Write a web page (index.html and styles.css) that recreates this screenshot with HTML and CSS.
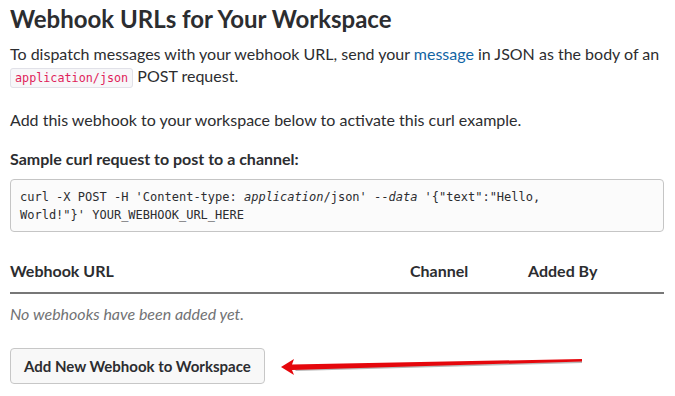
FILE: index.html
```html
<!DOCTYPE html>
<html lang="en">
<head>
    <meta charset="UTF-8">
    <title>Incoming Webhooks</title>
    <link rel="stylesheet" href="styles.css">
</head>
<body>
    <div class="page">
        <h2 class="title">Webhook URLs for Your Workspace</h2>
        <p class="intro">
            To dispatch messages with your webhook URL, send your <a href="#">message</a> in JSON as the body of an
            <code class="inline-code">application/json</code> POST request.
        </p>
        <p class="intro intro-last">Add this webhook to your workspace below to activate this curl example.</p>

        <h4 class="sample-title">Sample curl request to post to a channel:</h4>
        <pre class="code-block">curl -X POST -H 'Content-type: <i>application</i>/json' --<i>data</i> '{"text":"Hello,
World!"}' YOUR_WEBHOOK_URL_HERE</pre>

        <!-- 웹훅 목록 -->
        <div class="hooks">
            <div class="hooks-head">
                <span class="col-url">Webhook URL</span>
                <span class="col-channel">Channel</span>
                <span class="col-by">Added By</span>
            </div>
            <div class="hooks-empty">No webhooks have been added yet.</div>
        </div>

        <div class="actions">
            <button class="btn">Add New Webhook to Workspace</button>
            <svg class="arrow" width="310" height="24" viewBox="0 0 310 24">
                <!-- 그림자 -->
                <polygon points="14,15 302,7 302,9 16,17" fill="#9a9a9a" opacity="0.7"/>
                <!-- 화살표 -->
                <polygon points="1,13 14,5 12,10.5 302,5 302,7.5 12,16 14,21" fill="#e5070c"/>
            </svg>
        </div>
    </div>
</body>
</html>
```

FILE: styles.css
```css
body {
    margin: 0;
    padding: 0;
    background: #ffffff;
    color: #1d1c1d;
    font-family: Lato, "Open Sans", sans-serif;
}

.page {
    width: 654px;
    padding: 2px 10px 0 10px;
}

.title {
    margin: 0;
    font-size: 24px;
    font-weight: 700;
    line-height: 34px;
    color: #2c2d30;
}

.intro {
    margin: 7px 0 20px 0;
    font-size: 16px;
    line-height: 22px;
    color: #2c2d30;
}

.intro-last {
    margin: 0 0 17px 0;
}

.intro a {
    color: #1264a3;
    text-decoration: none;
}

/* 인라인 코드 */
.inline-code {
    font-family: "DejaVu Sans Mono", monospace;
    font-size: 11.75px;
    color: #e01e5a;
    background: #f7f7f9;
    border: 1px solid #e1e1e8;
    border-radius: 3px;
    padding: 2px 4px;
}

.sample-title {
    margin: 0 0 9px 0;
    font-size: 16px;
    font-weight: 700;
    line-height: 22px;
    color: #2c2d30;
}

.code-block {
    margin: 0;
    padding: 8px 9px 7px 9px;
    font-family: "DejaVu Sans Mono", monospace;
    font-size: 12px;
    line-height: 18px;
    color: #2c2d30;
    background: #fbfbfb;
    border: 1px solid #c5c5c5;
    border-radius: 4px;
    white-space: pre;
}

.code-block i {
    font-style: italic;
}

/* 테이블 */
.hooks {
    margin-top: 28px;
}

.hooks-head {
    display: flex;
    font-size: 16px;
    font-weight: 700;
    line-height: 22px;
    padding-bottom: 10px;
    border-bottom: 2px solid #777777;
    color: #2c2d30;
}

.col-url {
    width: 400px;
}

.col-channel {
    width: 118px;
}

.hooks-empty {
    padding-top: 9px;
    font-size: 16px;
    line-height: 22px;
    font-style: italic;
    color: #717274;
}

.actions {
    position: relative;
    margin-top: 23px;
}

.btn {
    font-family: Lato, "Open Sans", sans-serif;
    font-size: 15px;
    font-weight: 700;
    color: #2c2d30;
    background: #f8f8f8;
    border: 1px solid #c7c7c7;
    border-radius: 4px;
    height: 36px;
    padding: 0 13px;
}

.arrow {
    position: absolute;
    left: 270px;
    top: 6px;
}
```
